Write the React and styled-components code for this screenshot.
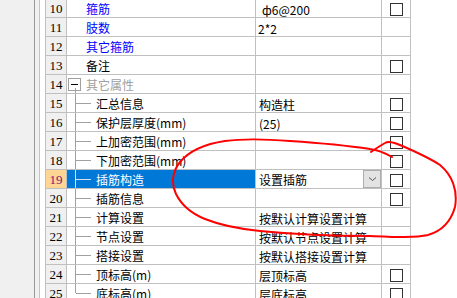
import React from "react";
import styled, { createGlobalStyle, css } from "styled-components";

const Global = createGlobalStyle`
  html, body { margin: 0; padding: 0; background: #fff; }
  body { font-family: "Noto Sans CJK SC", "Noto Sans", sans-serif; font-size: 12px; color: #000; }
`;

const Page = styled.div`
  position: relative;
  display: flex;
  width: 457px;
  height: 298px;
  overflow: hidden;
  background: #fff;
`;

const SidePanel = styled.div`
  width: 34px;
  flex: none;
  background: #f0f0f0;
  border-right: 1px solid #9a9a9a;
`;

const Splitter = styled.div`
  width: 4px;
  flex: none;
  background: #f0f0f0;
  border-right: 1px solid #c4c4c4;
`;

const Margin = styled.div`
  width: 5px;
  flex: none;
  background: #fff;
`;

const Grid = styled.div`
  flex: none;
  display: grid;
  grid-template-columns: 21px 189px 126px 29px;
  grid-auto-rows: 19px;
  margin-top: -2px;
  align-self: flex-start;
  border-top: 1px solid #c0c0c0;
  border-left: 1px solid #c0c0c0;
`;

const Cell = styled.div`
  box-sizing: border-box;
  border-right: 1px solid #c0c0c0;
  border-bottom: 1px solid #c0c0c0;
  display: flex;
  align-items: center;
  padding-top: 1px;
  white-space: nowrap;
  overflow: hidden;
`;

const NumCell = styled(Cell)`
  justify-content: center;
  background: ${(p) => (p.$sel ? "#fed592" : "#f0f0f0")};
  color: ${(p) => (p.$sel ? "#7a1478" : "#000")};
  font-family: "Liberation Serif", serif;
  font-size: 13px;
`;

const NameCell = styled(Cell)`
  position: relative;
  padding-left: ${(p) => p.$pad}px;
  background: ${(p) => (p.$sel ? "#0078d7" : "#fff")};
  color: ${(p) =>
    p.$sel ? "#fff" : p.$tone === "blue" ? "#0000ff" : p.$tone === "gray" ? "#a0a0a0" : "#000"};
  align-items: stretch;
  padding-top: 0;
`;

const NameText = styled.span`
  display: flex;
  align-items: center;
  padding-top: 1px;
`;

const Branch = styled.span`
  position: relative;
  width: 29px;
  flex: none;
  &::before {
    content: "";
    position: absolute;
    left: 8px;
    top: -1px;
    height: ${(p) => (p.$last ? "10px" : "20px")};
    border-left: 1px solid ${(p) => (p.$sel ? "#cfe3f7" : "#a0a0a0")};
  }
  &::after {
    content: "";
    position: absolute;
    left: 9px;
    width: 15px;
    top: 9px;
    border-top: 1px solid ${(p) => (p.$sel ? "#cfe3f7" : "#a0a0a0")};
  }
`;

const Toggle = styled.span`
  position: relative;
  width: 19px;
  flex: none;
  &::after {
    content: "";
    position: absolute;
    left: 8px;
    top: 13px;
    bottom: -1px;
    border-left: 1px solid #a0a0a0;
  }
`;

const ToggleBox = styled.span`
  position: absolute;
  left: 1px;
  top: 3px;
  width: 11px;
  height: 11px;
  border: 1px solid #a0a0a0;
  background: #fff;
  &::before {
    content: "";
    position: absolute;
    left: 2px;
    right: 2px;
    top: 5px;
    border-top: 1px solid #000;
  }
`;

const ValueCell = styled(Cell)`
  padding-left: ${(p) => p.$pad ?? 3}px;
  justify-content: space-between;
  ${(p) =>
    p.$dropdown &&
    css`
      padding-top: 0;
      align-items: stretch;
    `}
`;

const ValueText = styled.span`
  display: flex;
  align-items: center;
  padding-top: 1px;
`;

const DropButton = styled.span`
  box-sizing: border-box;
  width: 18px;
  background: #e3e3e3;
  border: 1px solid #adadad;
  display: flex;
  align-items: center;
  justify-content: center;
`;

const CheckCell = styled(Cell)`
  align-items: flex-start;
  justify-content: center;
  padding-top: 4px;
`;

const Box = styled.span`
  box-sizing: border-box;
  width: 13px;
  height: 13px;
  border: 1px solid #333;
  background: #fff;
`;

const Overlay = styled.svg`
  position: absolute;
  left: 0;
  top: 0;
  pointer-events: none;
`;

const rows = [
  { n: 10, name: "箍筋", tone: "blue", value: "ф6@200", check: true, vpad: 6 },
  { n: 11, name: "肢数", tone: "blue", value: "2*2", check: false, vpad: 2 },
  { n: 12, name: "其它箍筋", tone: "blue", value: "", check: false },
  { n: 13, name: "备注", value: "", check: true },
  { n: 14, name: "其它属性", tone: "gray", toggle: true, value: "", check: false },
  { n: 15, name: "汇总信息", branch: true, value: "构造柱", check: true },
  { n: 16, name: "保护层厚度(mm)", branch: true, value: "(25)", check: true },
  { n: 17, name: "上加密范围(mm)", branch: true, value: "", check: true },
  { n: 18, name: "下加密范围(mm)", branch: true, value: "", check: true },
  { n: 19, name: "插筋构造", branch: true, sel: true, value: "设置插筋", dropdown: true, check: true },
  { n: 20, name: "插筋信息", branch: true, value: "", check: true },
  { n: 21, name: "计算设置", branch: true, value: "按默认计算设置计算", check: false },
  { n: 22, name: "节点设置", branch: true, value: "按默认节点设置计算", check: false },
  { n: 23, name: "搭接设置", branch: true, value: "按默认搭接设置计算", check: false },
  { n: 24, name: "顶标高(m)", branch: true, value: "层顶标高", check: true },
  { n: 25, name: "底标高(m)", branch: true, value: "层底标高", check: true, last: true },
];

const Chevron = () => (
  <svg width="9" height="6" viewBox="0 0 9 6">
    <path d="M1 1.5 L4.5 4.5 L8 1.5" fill="none" stroke="#555" strokeWidth="1" />
  </svg>
);

export default function App() {
  return (
    <>
      <Global />
      <Page>
        <SidePanel />
        <Splitter />
        <Margin />
        <Grid>
          {rows.map((r) => (
            <React.Fragment key={r.n}>
              <NumCell $sel={r.sel}>{r.n}</NumCell>
              <NameCell
                $sel={r.sel}
                $tone={r.tone}
                $pad={r.branch ? 0 : r.toggle ? 0 : 19}
              >
                {r.branch && <Branch $last={r.last} $sel={r.sel} />}
                {r.toggle && (
                  <Toggle>
                    <ToggleBox />
                  </Toggle>
                )}
                <NameText>{r.name}</NameText>
              </NameCell>
              <ValueCell $pad={r.vpad} $dropdown={r.dropdown}>
                <ValueText>{r.value}</ValueText>
                {r.dropdown && (
                  <DropButton>
                    <Chevron />
                  </DropButton>
                )}
              </ValueCell>
              <CheckCell>{r.check && <Box />}</CheckCell>
            </React.Fragment>
          ))}
        </Grid>
        <Overlay width="457" height="298" viewBox="0 0 457 298">
          <path
            d="M392 157 C385 153 378 150 370 149 C350 146 320 143 290 141 C265 139 240 139 225 141 C205 144 190 150 180 162 C172 172 171 184 176 194 C181 204 190 213 205 219 C220 225 240 229 260 231 C290 234 330 236 370 236 C395 237 415 238 428 235 C442 231 451 221 455 207 C458 190 452 175 440 165 C428 157 414 151 400 145 C393 142 388 141 385 143 C380 146 375 149 371 152"
            fill="none"
            stroke="#f00"
            strokeWidth="2"
            strokeLinecap="round"
            strokeLinejoin="round"
          />
        </Overlay>
      </Page>
    </>
  );
}
